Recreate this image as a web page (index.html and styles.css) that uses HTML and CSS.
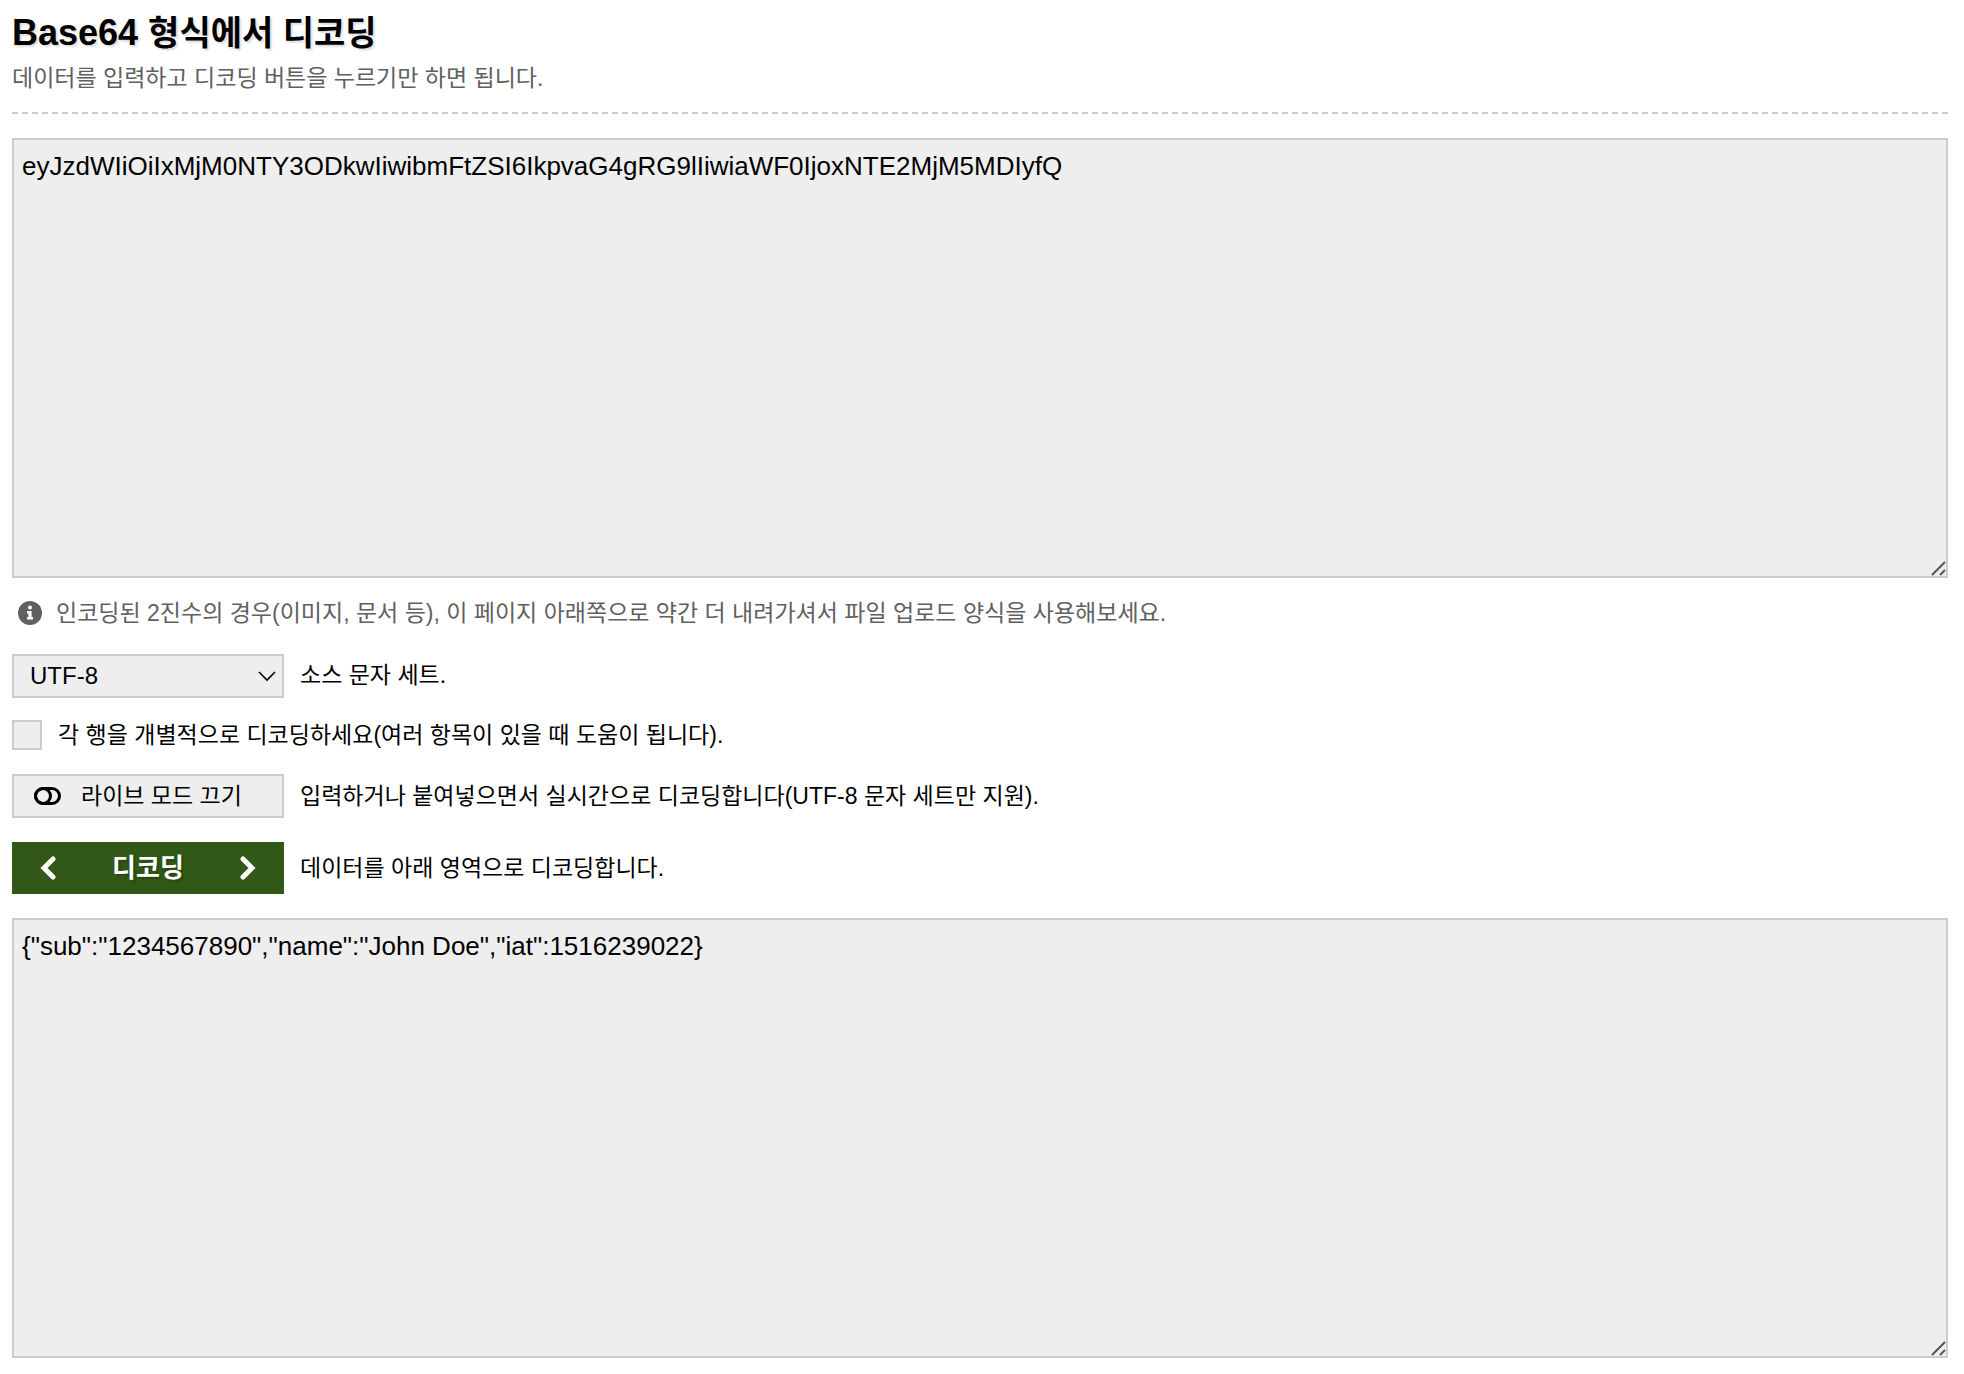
FILE: index.html
```html
<!DOCTYPE html>
<html lang="ko">
<head>
    <meta charset="UTF-8">
    <title>Base64 형식에서 디코딩</title>
    <link rel="stylesheet" href="styles.css">
</head>
<body>
    <header>
        <h1>Base64 <span class="ko">형식에서 디코딩</span></h1>
        <p>데이터를 입력하고 디코딩 버튼을 누르기만 하면 됩니다.</p>
    </header>
    <form id="decoder">
        <textarea id="input" aria-label="디코딩할 데이터" spellcheck="false">eyJzdWIiOiIxMjM0NTY3ODkwIiwibmFtZSI6IkpvaG4gRG9lIiwiaWF0IjoxNTE2MjM5MDIyfQ</textarea>
        <p class="hint">
            <svg class="info" viewBox="0 0 24 24" aria-hidden="true">
                <circle cx="12" cy="12" r="12" fill="#606060"/>
                <circle cx="12" cy="6.5" r="2" fill="#fff"/>
                <path d="M9 10h4.6v6H15v2.4H9V16h1.4v-3.6H9z" fill="#fff"/>
            </svg>
            인코딩된 2진수의 경우(이미지, 문서 등), 이 페이지 아래쪽으로 약간 더 내려가셔서 파일 업로드 양식을 사용해보세요.
        </p>
        <div class="row">
            <select id="charset">
                <option>UTF-8</option>
                <option>ASCII</option>
                <option>EUC-KR</option>
            </select>
            <label for="charset">소스 문자 세트.</label>
        </div>
        <div class="row">
            <input type="checkbox" id="lines">
            <label for="lines">각 행을 개별적으로 디코딩하세요(여러 항목이 있을 때 도움이 됩니다).</label>
        </div>
        <div class="row">
            <button type="button" class="live" id="live">
                <svg class="toggle" viewBox="0 0 27 18" aria-hidden="true">
                    <rect x="1.5" y="1.5" width="24" height="15" rx="7.5"/>
                    <circle cx="9" cy="9" r="7.5"/>
                </svg>
                라이브 모드 끄기
            </button>
            <label for="live">입력하거나 붙여넣으면서 실시간으로 디코딩합니다(UTF-8 문자 세트만 지원).</label>
        </div>
        <div class="row">
            <button type="submit" class="decode" id="decode">
                <svg class="chevron" viewBox="0 0 16 24" aria-hidden="true"><path d="M13 3L4 12l9 9"/></svg>
                디코딩
                <svg class="chevron" viewBox="0 0 16 24" aria-hidden="true"><path d="M3 3l9 9-9 9"/></svg>
            </button>
            <label for="decode">데이터를 아래 영역으로 디코딩합니다.</label>
        </div>
        <textarea id="output" aria-label="결과" spellcheck="false">{"sub":"1234567890","name":"John Doe","iat":1516239022}</textarea>
    </form>
</body>
</html>
```

FILE: styles.css
```css
* {
    box-sizing: border-box;
}

body {
    margin: 0;
    padding: 11px 16px 16px 12px;
    background: #fff;
    color: #000;
    font-family: "Liberation Sans", "Noto Sans CJK KR", sans-serif;
    font-size: 23px;
    line-height: 30px;
}

header {
    padding-bottom: 19px;
    margin-bottom: 24px;
    border-bottom: 2px dashed #ccc;
}

h1 {
    margin: 0 0 8px;
    font-size: 36px;
    line-height: 44px;
    text-shadow: 2px 2px 2px #ddd;
}

h1 .ko {
    font-size: 34px;
}

header p {
    margin: 0;
    color: #606060;
}

textarea {
    display: block;
    width: 100%;
    height: 440px;
    padding: 10px 8px;
    border: 2px solid #ccc;
    border-radius: 0;
    background: #eee;
    color: #000;
    font: inherit;
    font-size: 26px;
    line-height: 32px;
    outline: none;
    resize: vertical;
}

textarea::-webkit-scrollbar {
    width: 17px;
    height: 17px;
}

textarea::-webkit-resizer {
    background: #eee url("data:image/svg+xml,%3Csvg xmlns='http://www.w3.org/2000/svg' width='15' height='15'%3E%3Cpath d='M1 14L14 1M9 14l5-5' stroke='%23555' stroke-width='2'/%3E%3C/svg%3E") no-repeat left top;
}

.hint {
    display: flex;
    align-items: center;
    gap: 14px;
    margin: 20px 0 26px;
    padding-left: 6px;
    color: #606060;
}

.info {
    flex: none;
    width: 24px;
    height: 24px;
}

.row {
    display: flex;
    align-items: center;
    gap: 16px;
    margin-bottom: 24px;
}

select,
button {
    flex: none;
    width: 272px;
    height: 44px;
    border: 2px solid #ccc;
    border-radius: 0;
    background: #eee;
    color: #000;
    font: inherit;
}

select {
    appearance: none;
    margin-bottom: -2px;
    padding: 0 16px;
    font-size: 24px;
    background: #eee url("data:image/svg+xml,%3Csvg xmlns='http://www.w3.org/2000/svg' width='18' height='12'%3E%3Cpath d='M1 2l8 8 8-8' fill='none' stroke='%23000' stroke-width='1.6'/%3E%3C/svg%3E") no-repeat right 6px center;
}

input[type="checkbox"] {
    appearance: none;
    flex: none;
    width: 30px;
    height: 30px;
    margin: 0;
    border: 2px solid #ccc;
    background: #eee;
}

input[type="checkbox"]:checked {
    background: #315816;
}

button {
    display: flex;
    align-items: center;
    cursor: pointer;
}

.live {
    gap: 20px;
    padding: 0 20px;
}

.toggle {
    width: 27px;
    height: 18px;
    fill: none;
    stroke: #000;
    stroke-width: 3;
}

.decode {
    justify-content: space-between;
    height: 52px;
    padding: 0 28px;
    border: none;
    background: #315816;
    color: #fff;
    font-size: 26px;
    font-weight: bold;
    text-shadow: 2px 2px 2px rgba(0, 0, 0, 0.2);
}

.chevron {
    width: 16px;
    height: 24px;
    fill: none;
    stroke: #fff;
    stroke-width: 5;
    stroke-linecap: round;
}
```
